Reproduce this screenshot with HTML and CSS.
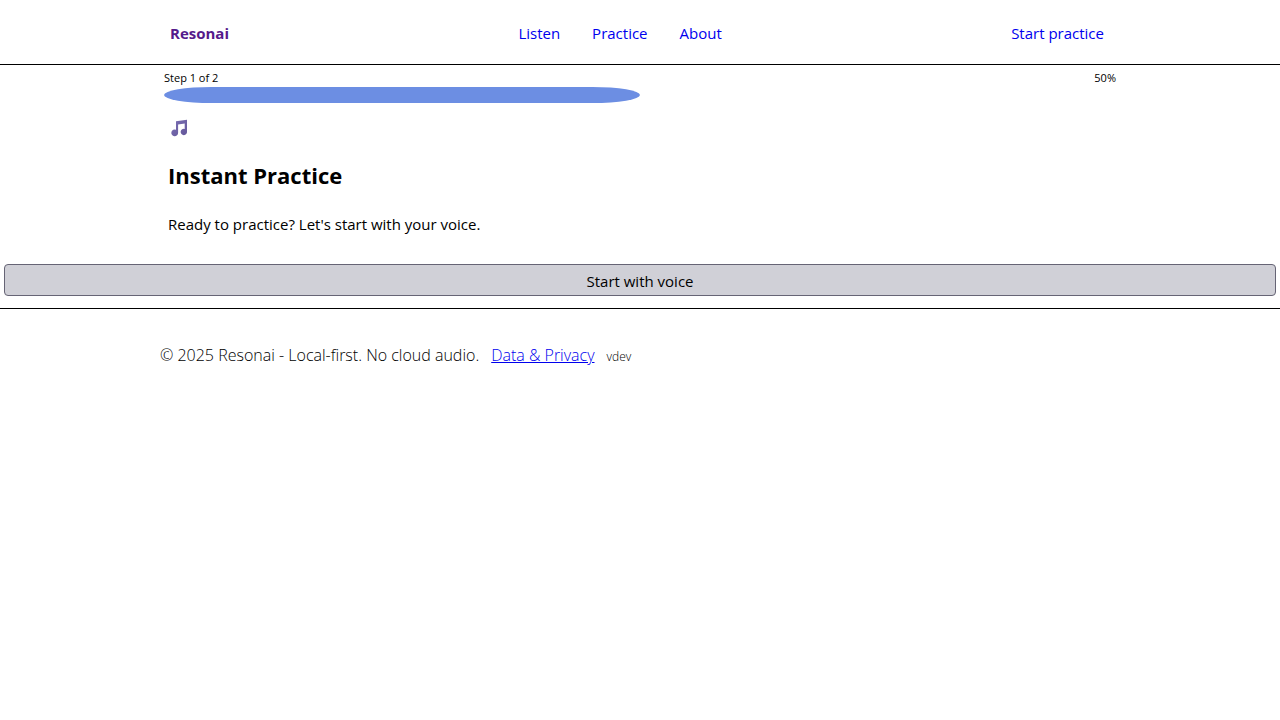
FILE: index.html
```html
<!DOCTYPE html>
<html lang="en">
<head>
<meta charset="utf-8">
<meta name="viewport" content="width=device-width, initial-scale=1">
<title>Resonai</title>
<link rel="stylesheet" href="styles.css">
</head>
<body>
<header class="site-header">
  <div class="header-inner">
    <a class="brand" href="#home">Resonai</a>
    <nav class="main-nav" aria-label="Main">
      <a href="#listen">Listen</a>
      <a href="#practice">Practice</a>
      <a href="#about">About</a>
    </nav>
    <a class="start-link" href="#start">Start practice</a>
  </div>
</header>
<main>
  <section class="progress">
    <div class="progress-labels"><span>Step 1 of 2</span><span>50%</span></div>
    <div class="progress-track"><div class="progress-fill" style="width: 50%"></div></div>
  </section>
  <section class="intro">
    <svg class="note-icon" viewBox="0 0 18 18" aria-hidden="true">
      <defs>
        <linearGradient id="note-shade" x1="0" y1="0" x2="1" y2="1">
          <stop offset="0" stop-color="#7b70b4"/>
          <stop offset="1" stop-color="#635699"/>
        </linearGradient>
      </defs>
      <path fill="url(#note-shade)" d="M6 2.200 17 .8V12.500a3.200 3.200 0 1 1-2.300-2.600V4.500L8.100 5.500v8.200A3.400 3.400 0 1 1 6 10.700Z"/>
    </svg>
    <h1>Instant Practice</h1>
    <p>Ready to practice? Let's start with your voice.</p>
  </section>
  <div class="actions"><button class="voice-button" type="button">Start with voice</button></div>
</main>
<footer class="site-footer">
  <div class="footer-inner">
    <span>© 2025 Resonai - Local-first. No cloud audio.</span>
    <a href="#privacy">Data &amp; Privacy</a>
    <span class="version">vdev</span>
  </div>
</footer>
</body>
</html>
```

FILE: styles.css
```css
* { box-sizing: border-box; }
body { margin: 0; background: #fff; color: #000; font: 15px/24px "Segoe UI", "Open Sans", "Noto Sans", sans-serif; }
a { color: #0000ee; }
.site-header { border-bottom: 1px solid #000; padding: 21px 0 19px; }
.header-inner { display: flex; justify-content: space-between; max-width: 960px; margin: 0 auto; padding: 0 16px 0 10px; }
.header-inner a { text-decoration: none; }
.header-inner .brand { color: #551a8b; font-weight: 700; }
.main-nav { display: flex; gap: 32px; }
.progress { max-width: 952px; margin: 0 auto; padding-top: 4px; }
.progress-labels { display: flex; justify-content: space-between; font-size: 11px; line-height: 18px; }
.progress-fill { height: 16px; border-radius: 10% / 50%; background: #6c8ee3; }
.intro { max-width: 944px; margin: 0 auto; padding-top: 16px; }
.note-icon { display: block; width: 18px; height: 18px; margin-left: 2px; }
h1 { margin: 22px 0 21px; font-size: 22px; line-height: 32px; }
p { margin: 0; }
.actions { padding: 28px 4px 12px; }
.voice-button { display: block; width: 100%; height: 32px; padding: 2px 0 0; border: 1px solid #666475; border-radius: 4px; background: #d0d0d7; color: #000; font: inherit; }
.site-footer { border-top: 1px solid #000; padding: 34px 0; font-size: 16px; font-weight: 300; }
.footer-inner { display: flex; align-items: baseline; gap: 12px; max-width: 960px; margin: 0 auto; }
.version { font-size: 12px; }
```
